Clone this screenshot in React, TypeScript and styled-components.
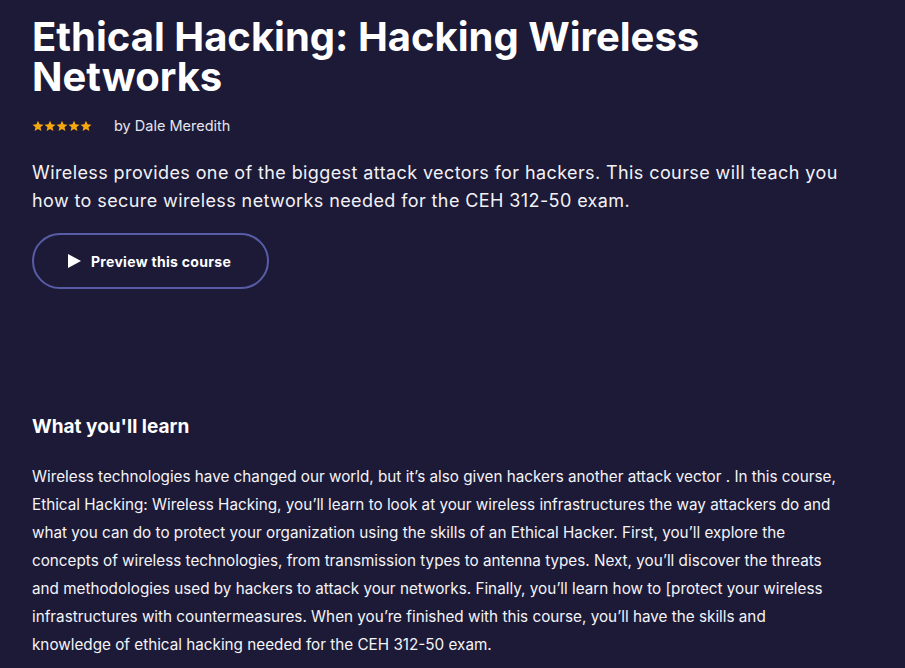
import React from "react";
import styled, { createGlobalStyle } from "styled-components";

const GlobalStyle = createGlobalStyle`
  html, body {
    margin: 0;
    padding: 0;
    background: #1d1a37;
  }
  body {
    font-family: Inter, "Liberation Sans", sans-serif;
    color: #ffffff;
  }
`;

const Page = styled.div`
  min-height: 668px;
  background: #1d1a37;
  padding: 17px 32px 0 32px;
  box-sizing: border-box;
`;

const Hero = styled.section`
  display: flex;
  flex-direction: column;
  max-width: 820px;
`;

const Title = styled.h1`
  margin: 0;
  font-size: 40px;
  font-weight: 700;
  line-height: 40px;
  letter-spacing: 0;
`;

const MetaRow = styled.div`
  display: flex;
  align-items: center;
  gap: 22px;
  margin-top: 20px;
`;

const Stars = styled.div`
  display: flex;
  gap: 0;
`;

const Author = styled.span`
  font-size: 14.5px;
  color: #e6e6ee;
`;

const Lead = styled.p`
  margin: 25px 0 0;
  font-size: 18px;
  line-height: 28px;
  letter-spacing: 0.4px;
  color: #f2f2f6;
  max-width: 815px;
`;

const PreviewButton = styled.button`
  margin-top: 18px;
  align-self: flex-start;
  display: flex;
  align-items: center;
  gap: 10px;
  width: 237px;
  height: 56px;
  padding: 0 0 0 34px;
  box-sizing: border-box;
  background: transparent;
  border: 2px solid #585ca6;
  border-radius: 28px;
  color: #ffffff;
  font-family: inherit;
  font-size: 14px;
  font-weight: 700;
  letter-spacing: 0.3px;
  cursor: pointer;
`;

const Learn = styled.section`
  margin-top: 124px;
  max-width: 806px;
`;

const SectionTitle = styled.h2`
  margin: 0;
  font-size: 19px;
  font-weight: 700;
  line-height: 28px;
`;

const Body = styled.p`
  margin: 22px 0 0;
  font-size: 15.25px;
  line-height: 28px;
  color: #f4f4f8;
`;

const Star = () => (
  <svg width="12" height="12" viewBox="0 0 24 24">
    <path
      fill="#f7a80f"
      d="M12 1.5l3.1 7.2 7.8.6-5.9 5.1 1.8 7.6L12 18l-6.8 4 1.8-7.6L1.1 9.3l7.8-.6z"
    />
  </svg>
);

const PlayIcon = () => (
  <svg width="13" height="14" viewBox="0 0 13 14">
    <path fill="#ffffff" d="M0 0L13 7L0 14Z" />
  </svg>
);

const App: React.FC = () => {
  return (
    <>
      <GlobalStyle />
      <Page>
        <Hero>
          <Title>Ethical Hacking: Hacking Wireless Networks</Title>
          <MetaRow>
            <Stars>
              {[0, 1, 2, 3, 4].map((i) => (
                <Star key={i} />
              ))}
            </Stars>
            <Author>by Dale Meredith</Author>
          </MetaRow>
          <Lead>
            Wireless provides one of the biggest attack vectors for hackers.
            This course will teach you how to secure wireless networks needed
            for the CEH 312-50 exam.
          </Lead>
          <PreviewButton>
            <PlayIcon />
            Preview this course
          </PreviewButton>
        </Hero>
        <Learn>
          <SectionTitle>What you'll learn</SectionTitle>
          <Body>
            Wireless technologies have changed our world, but it’s also given
            hackers another attack vector . In this course, Ethical Hacking:
            Wireless Hacking, you’ll learn to look at your wireless
            infrastructures the way attackers do and what you can do to protect
            your organization using the skills of an Ethical Hacker. First,
            you’ll explore the concepts of wireless technologies, from
            transmission types to antenna types. Next, you’ll discover the
            threats and methodologies used by hackers to attack your networks.
            Finally, you’ll learn how to [protect your wireless infrastructures
            with countermeasures. When you’re finished with this course, you’ll
            have the skills and knowledge of ethical hacking needed for the CEH
            312-50 exam.
          </Body>
        </Learn>
      </Page>
    </>
  );
};

export default App;
